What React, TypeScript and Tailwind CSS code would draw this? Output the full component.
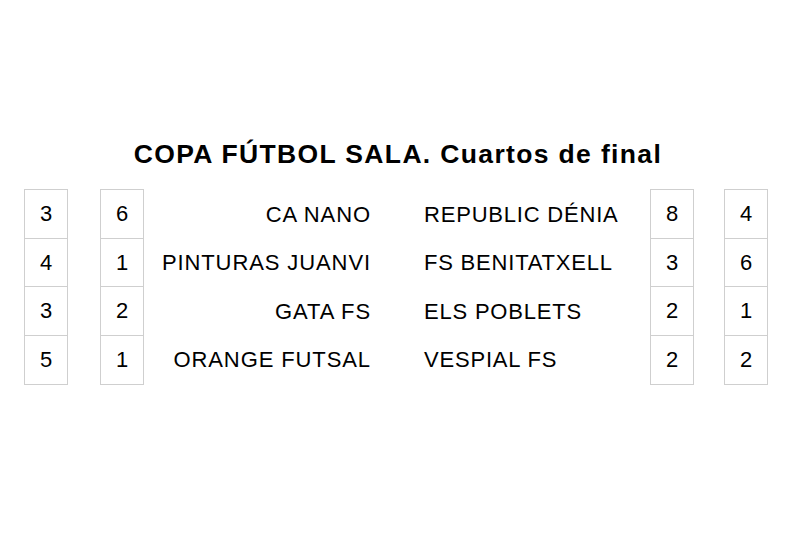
const matches = [
  { a1: 3, a2: 6, home: "CA NANO", away: "REPUBLIC DÉNIA", b1: 8, b2: 4 },
  { a1: 4, a2: 1, home: "PINTURAS JUANVI", away: "FS BENITATXELL", b1: 3, b2: 6 },
  { a1: 3, a2: 2, home: "GATA FS", away: "ELS POBLETS", b1: 2, b2: 1 },
  { a1: 5, a2: 1, home: "ORANGE FUTSAL", away: "VESPIAL FS", b1: 2, b2: 2 },
];

function ScoreColumn({ values }: { values: number[] }) {
  return (
    <div className="flex w-[44px] flex-col border border-[#cfcfcf] divide-y divide-[#cfcfcf]">
      {values.map((v, i) => (
        <div key={i} className="flex h-[48.5px] items-center justify-center">
          {v}
        </div>
      ))}
    </div>
  );
}

export default function App() {
  return (
    <div
      className="h-[533px] w-[800px] bg-white text-black"
      style={{ fontFamily: '"Liberation Sans", Arial, sans-serif' }}
    >
      <h1 className="pt-[138px] text-center text-[26.5px] font-bold leading-[32px] tracking-[1.35px] pr-[4px]">
        COPA FÚTBOL SALA. Cuartos de final
      </h1>
      <div className="mt-[19px] flex text-[22px]">
        <div className="ml-[24px]">
          <ScoreColumn values={matches.map((m) => m.a1)} />
        </div>
        <div className="ml-[32px]">
          <ScoreColumn values={matches.map((m) => m.a2)} />
        </div>
        <div className="flex w-[227px] flex-col pt-[1px] tracking-[0.9px]">
          {matches.map((m) => (
            <div key={m.home} className="flex h-[48.5px] items-center justify-end">
              {m.home}
            </div>
          ))}
        </div>
        <div className="ml-[53px] flex w-[226px] flex-col pt-[1px] tracking-[0.8px]">
          {matches.map((m) => (
            <div key={m.away} className="flex h-[48.5px] items-center">
              {m.away}
            </div>
          ))}
        </div>
        <ScoreColumn values={matches.map((m) => m.b1)} />
        <div className="ml-[30px]">
          <ScoreColumn values={matches.map((m) => m.b2)} />
        </div>
      </div>
    </div>
  );
}
